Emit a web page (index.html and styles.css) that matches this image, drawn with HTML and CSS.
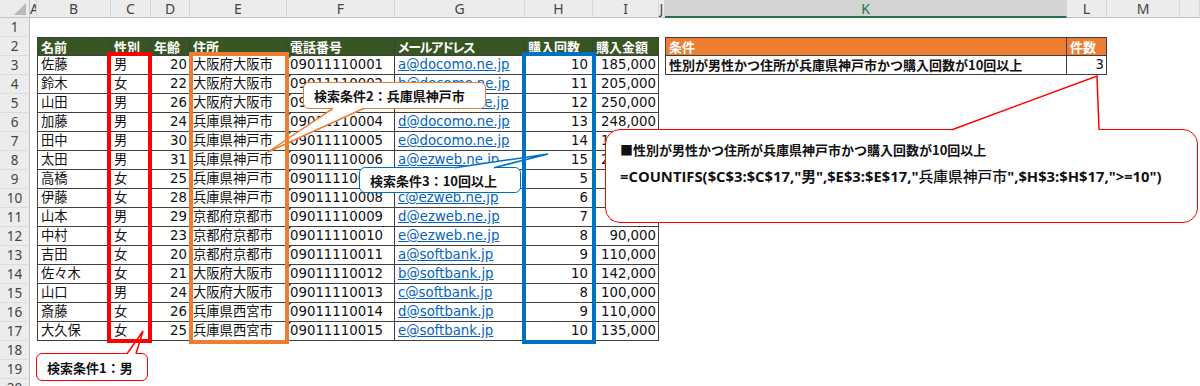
FILE: index.html
```html
<!DOCTYPE html>
<html lang="ja">
<head>
<meta charset="utf-8">
<title>COUNTIFS</title>
<link rel="stylesheet" href="styles.css">
</head>
<body>
<div class="page">
  <div class="sheet">
    <div class="row colhdr"><div class="corner"></div><div class="ch">A</div><div class="ch">B</div><div class="ch">C</div><div class="ch">D</div><div class="ch">E</div><div class="ch">F</div><div class="ch">G</div><div class="ch">H</div><div class="ch">I</div><div class="ch">J</div><div class="ch sel">K</div><div class="ch">L</div><div class="ch">M</div><div class="ch"></div></div>
    <div class="row"><div class="rh">1</div></div>
    <div class="row top"><div class="rh">2</div><div></div><div class="c th b1">名前</div><div class="c th">性別</div><div class="c th">年齢</div><div class="c th">住所</div><div class="c th">電話番号</div><div class="c th narrow">メールアドレス</div><div class="c th">購入回数</div><div class="c th">購入金額</div><div></div><div class="c oh b1">条件</div><div class="c oh">件数</div></div>
    <div class="row"><div class="rh">3</div><div></div><div class="c t b1">佐藤</div><div class="c t">男</div><div class="c n">20</div><div class="c t">大阪府大阪市</div><div class="c t tel">09011110001</div><div class="c t"><span class="link">a@docomo.ne.jp</span></div><div class="c n nh">10</div><div class="c n">185,000</div><div></div><div class="c kb b1">性別が男性かつ住所が兵庫県神戸市かつ購入回数が10回以上</div><div class="c n">3</div></div>
    <div class="row"><div class="rh">4</div><div></div><div class="c t b1">鈴木</div><div class="c t">女</div><div class="c n">22</div><div class="c t">大阪府大阪市</div><div class="c t tel">09011110002</div><div class="c t"><span class="link">b@docomo.ne.jp</span></div><div class="c n nh">11</div><div class="c n">205,000</div></div>
    <div class="row"><div class="rh">5</div><div></div><div class="c t b1">山田</div><div class="c t">男</div><div class="c n">26</div><div class="c t">大阪府大阪市</div><div class="c t tel">09011110003</div><div class="c t"><span class="link">c@docomo.ne.jp</span></div><div class="c n nh">12</div><div class="c n">250,000</div></div>
    <div class="row"><div class="rh">6</div><div></div><div class="c t b1">加藤</div><div class="c t">男</div><div class="c n">24</div><div class="c t">兵庫県神戸市</div><div class="c t tel">09011110004</div><div class="c t"><span class="link">d@docomo.ne.jp</span></div><div class="c n nh">13</div><div class="c n">248,000</div></div>
    <div class="row"><div class="rh">7</div><div></div><div class="c t b1">田中</div><div class="c t">男</div><div class="c n">30</div><div class="c t">兵庫県神戸市</div><div class="c t tel">09011110005</div><div class="c t"><span class="link">e@docomo.ne.jp</span></div><div class="c n nh">14</div><div class="c n">150,000</div></div>
    <div class="row"><div class="rh">8</div><div></div><div class="c t b1">太田</div><div class="c t">男</div><div class="c n">31</div><div class="c t">兵庫県神戸市</div><div class="c t tel">09011110006</div><div class="c t"><span class="link">a@ezweb.ne.jp</span></div><div class="c n nh">15</div><div class="c n">230,000</div></div>
    <div class="row"><div class="rh">9</div><div></div><div class="c t b1">高橋</div><div class="c t">女</div><div class="c n">25</div><div class="c t">兵庫県神戸市</div><div class="c t tel">09011110007</div><div class="c t"><span class="link">b@ezweb.ne.jp</span></div><div class="c n nh">5</div><div class="c n">60,000</div></div>
    <div class="row"><div class="rh">10</div><div></div><div class="c t b1">伊藤</div><div class="c t">女</div><div class="c n">28</div><div class="c t">兵庫県神戸市</div><div class="c t tel">09011110008</div><div class="c t"><span class="link">c@ezweb.ne.jp</span></div><div class="c n nh">6</div><div class="c n">70,000</div></div>
    <div class="row"><div class="rh">11</div><div></div><div class="c t b1">山本</div><div class="c t">男</div><div class="c n">29</div><div class="c t">京都府京都市</div><div class="c t tel">09011110009</div><div class="c t"><span class="link">d@ezweb.ne.jp</span></div><div class="c n nh">7</div><div class="c n">80,000</div></div>
    <div class="row"><div class="rh">12</div><div></div><div class="c t b1">中村</div><div class="c t">女</div><div class="c n">23</div><div class="c t">京都府京都市</div><div class="c t tel">09011110010</div><div class="c t"><span class="link">e@ezweb.ne.jp</span></div><div class="c n nh">8</div><div class="c n">90,000</div></div>
    <div class="row"><div class="rh">13</div><div></div><div class="c t b1">吉田</div><div class="c t">女</div><div class="c n">20</div><div class="c t">京都府京都市</div><div class="c t tel">09011110011</div><div class="c t"><span class="link">a@softbank.jp</span></div><div class="c n nh">9</div><div class="c n">110,000</div></div>
    <div class="row"><div class="rh">14</div><div></div><div class="c t b1">佐々木</div><div class="c t">女</div><div class="c n">21</div><div class="c t">大阪府大阪市</div><div class="c t tel">09011110012</div><div class="c t"><span class="link">b@softbank.jp</span></div><div class="c n nh">10</div><div class="c n">142,000</div></div>
    <div class="row"><div class="rh">15</div><div></div><div class="c t b1">山口</div><div class="c t">男</div><div class="c n">24</div><div class="c t">大阪府大阪市</div><div class="c t tel">09011110013</div><div class="c t"><span class="link">c@softbank.jp</span></div><div class="c n nh">8</div><div class="c n">100,000</div></div>
    <div class="row"><div class="rh">16</div><div></div><div class="c t b1">斎藤</div><div class="c t">女</div><div class="c n">26</div><div class="c t">兵庫県西宮市</div><div class="c t tel">09011110014</div><div class="c t"><span class="link">d@softbank.jp</span></div><div class="c n nh">9</div><div class="c n">110,000</div></div>
    <div class="row"><div class="rh">17</div><div></div><div class="c t b1">大久保</div><div class="c t">女</div><div class="c n">25</div><div class="c t">兵庫県西宮市</div><div class="c t tel">09011110015</div><div class="c t"><span class="link">e@softbank.jp</span></div><div class="c n nh">10</div><div class="c n">135,000</div></div>
    <div class="row"><div class="rh">18</div></div>
    <div class="row"><div class="rh">19</div></div>
    <div class="row"><div class="rh">20</div></div>
  </div>

  <div class="callout co1">検索条件1：男</div>
  <div class="callout co2">検索条件2：兵庫県神戸市</div>
  <div class="callout co3">検索条件3：10回以上</div>
  <div class="callout co4">
    <div class="co4-title">■性別が男性かつ住所が兵庫県神戸市かつ購入回数が10回以上</div>
    <div class="co4-formula">=COUNTIFS($C$3:$C$17,"男",$E$3:$E$17,"<span class="reg">兵庫県神戸市</span>",$H$3:$H$17,"&gt;=10")</div>
  </div>

  <svg class="tails" width="1200" height="386" viewBox="0 0 1200 386">
    <polygon class="tail-fill" points="127.5,355.5 127,353 143,331 136,353 135.5,355.5"/>
    <polyline class="tail-line red" points="127,353.7 143,331 136,353.7"/>
    <polygon class="tail-fill" points="333.5,107 333,109 268,152 364,109 363.5,107"/>
    <polyline class="tail-line orange" points="333,108.3 268,152 364,108.3"/>
    <polygon class="tail-fill" points="455.5,169.5 455,167 548,154 494,167 493.5,169.5"/>
    <polyline class="tail-line blue" points="455,167.7 548,154 494,167.7"/>
    <polygon class="tail-fill" points="953,131.5 952,129 1097,76 1099,129 1098,131.5"/>
    <polyline class="tail-line red" points="952,129.7 1097,76 1099,129.7"/>
  </svg>

  <div class="hl hl-c"></div>
  <div class="hl hl-e"></div>
  <div class="hl hl-h"></div>
</div>
</body>
</html>
```

FILE: styles.css
```css
html, body {
  margin: 0;
  padding: 0;
  background: #ffffff;
}

.page {
  position: relative;
  width: 1200px;
  height: 386px;
  overflow: hidden;
  background: #ffffff;
  font-family: "DejaVu Sans", "Noto Sans CJK JP", sans-serif;
  font-size: 13.3px;
  color: #111111;
}

.row {
  display: grid;
  grid-template-columns: 30px 7px 74px 40px 39px 97px 108px 130px 68px 66px 6px 402px 40px 73px 1fr;
  height: 19px;
}

.row > div {
  box-sizing: border-box;
  min-width: 0;
  overflow: hidden;
  white-space: nowrap;
  line-height: 18px;
}

.colhdr {
  height: 18px;
}

.ch {
  background: #ececec;
  border-right: 1px solid #d6d6d6;
  border-bottom: 1px solid #c2c2c2;
  font-family: "Noto Sans", sans-serif;
  font-size: 14px;
  line-height: 17px !important;
  color: #444444;
  text-align: center;
}

.ch.sel {
  background: #d3d3d3;
  color: #217346;
  border-bottom: 2px solid #217346;
}

.corner {
  position: relative;
  background: #ececec;
  border-right: 1px solid #c2c2c2;
  border-bottom: 1px solid #c2c2c2;
}

.corner::after {
  content: "";
  position: absolute;
  right: 3px;
  bottom: 2px;
  width: 12px;
  height: 12px;
  background: #b9b9b9;
  clip-path: polygon(100% 0, 100% 100%, 0 100%);
}

.rh {
  background: #ececec;
  border-right: 1px solid #c2c2c2;
  border-bottom: 1px solid #dcdcdc;
  text-align: center;
  font-family: "Noto Sans", sans-serif;
  font-size: 13.5px;
  color: #444444;
}

.c {
  border-right: 1px solid #3f3f3f;
  border-bottom: 1px solid #3f3f3f;
}

.b1 {
  border-left: 1px solid #3f3f3f;
}

.top > .c {
  border-top: 1px solid #3f3f3f;
  line-height: 17px !important;
}

.t {
  padding-left: 3px;
}

.n {
  text-align: right;
  padding-right: 2px;
}

.nh {
  padding-right: 4px;
}

.th {
  background: #375623;
  color: #ffffff;
  font-family: "Noto Sans CJK JP", sans-serif;
  font-weight: bold;
  font-size: 13px;
  padding-left: 3px;
  font-feature-settings: "palt";
}

.th.narrow {
  letter-spacing: -1.2px;
}

.oh {
  background: #ed7d31;
  color: #ffffff;
  font-family: "Noto Sans CJK JP", sans-serif;
  font-weight: bold;
  font-size: 13px;
  padding-left: 3px;
}

.kb {
  font-family: "Noto Sans CJK JP", sans-serif;
  font-weight: bold;
  font-size: 13px;
  padding-left: 3px;
}

.tel {
  background: linear-gradient(135deg, #1e7a45 0 3px, transparent 3px) no-repeat 0 0 / 6px 6px;
}

.link {
  color: #0563c1;
  text-decoration: underline;
}

/* callouts */
.callout {
  position: absolute;
  z-index: 1;
  box-sizing: border-box;
  background: #ffffff;
  border: 1.5px solid #ff0000;
  border-radius: 6px;
  font-family: "Noto Sans CJK JP", sans-serif;
  font-weight: bold;
  font-size: 13px;
  color: #111111;
  white-space: nowrap;
  display: flex;
  align-items: center;
}

.co1 {
  left: 36px;
  top: 353px;
  width: 112px;
  height: 28px;
  padding-left: 10px;
}

.co2 {
  left: 303px;
  top: 82px;
  width: 183px;
  height: 27px;
  padding-left: 10px;
  border-color: #ed7d31;
}

.co3 {
  left: 359px;
  top: 167px;
  width: 162px;
  height: 26px;
  padding-left: 10px;
  border-color: #0070c0;
}

.co4 {
  left: 605px;
  top: 129px;
  width: 593px;
  height: 94px;
  border-radius: 15px;
  display: block;
  padding: 11px 0 0 14px;
}

.co4-title {
  line-height: 18px;
  font-size: 13px;
}

.co4-formula {
  margin-top: 7px;
  line-height: 20px;
  font-family: "Open Sans", "Noto Sans CJK JP", sans-serif;
  font-size: 14.8px;
  font-weight: bold;
}

.co4-formula .reg {
  font-family: "Noto Sans CJK JP", sans-serif;
  font-weight: 500;
}

.tails {
  position: absolute;
  left: 0;
  top: 0;
  z-index: 2;
}

.tail-fill {
  fill: #ffffff;
}

.tail-line {
  fill: none;
  stroke-width: 1.5;
  stroke-linejoin: miter;
}

.tail-line.red { stroke: #ff0000; }
.tail-line.orange { stroke: #ed7d31; }
.tail-line.blue { stroke: #0070c0; }

/* highlight frames */
.hl {
  position: absolute;
  z-index: 3;
  box-sizing: border-box;
  border: 4px solid;
}

.hl-c {
  left: 107px;
  top: 52px;
  width: 45px;
  height: 291px;
  border-color: #ff0000;
}

.hl-e {
  left: 189px;
  top: 52px;
  width: 100px;
  height: 292px;
  border-color: #ed7d31;
}

.hl-h {
  left: 522px;
  top: 52px;
  width: 74px;
  height: 292px;
  border-color: #0070c0;
}
```
